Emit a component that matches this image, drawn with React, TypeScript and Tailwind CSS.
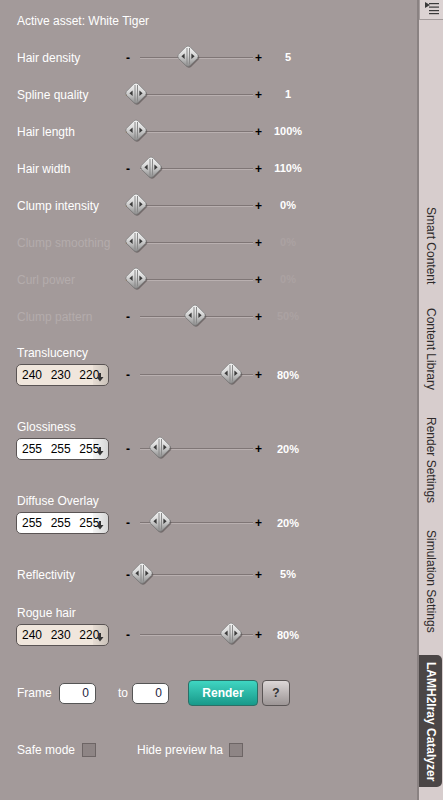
import React from "react";

const FONT = { fontFamily: '"Liberation Sans", Arial, sans-serif' };

function Knob() {
  return (
    <svg width="26" height="24" viewBox="0 0 26 24">
      <defs>
        <linearGradient id="kg" x1="0" y1="0" x2="0" y2="1">
          <stop offset="0" stopColor="#f6f6f6" />
          <stop offset="0.45" stopColor="#d6d6d6" />
          <stop offset="1" stopColor="#8c8c8c" />
        </linearGradient>
      </defs>
      <path
        d="M11 3 Q13 1.5 15 3 L22.5 10.5 Q24 12.5 22.5 14.5 L15 22 Q13 23.5 11 22 L3.5 14.5 Q2 12.5 3.5 10.5 Z"
        fill="#4a4444"
        opacity="0.55"
      />
      <path
        d="M10 1.8 Q12 0.3 14 1.8 L21.5 9.3 Q23 11.3 21.5 13.3 L14 20.8 Q12 22.3 10 20.8 L2.5 13.3 Q1 11.3 2.5 9.3 Z"
        fill="url(#kg)"
        stroke="#777"
        strokeWidth="0.7"
      />
      <rect x="10.5" y="3" width="1" height="16.5" fill="#8a8a8a" />
      <rect x="13" y="3" width="1" height="16.5" fill="#8a8a8a" />
      <path d="M8.6 8.6 L5.4 11.3 L8.6 14 Z" fill="#3a3a3a" />
      <path d="M15.4 8.6 L18.6 11.3 L15.4 14 Z" fill="#3a3a3a" />
    </svg>
  );
}

function Slider({ pct }: { pct: number }) {
  const left = pct * 118.75 - 2;
  return (
    <div className="relative w-[138px] h-[24px] flex items-center">
      <span className="w-[6px] text-[12px] font-bold text-black leading-none">-</span>
      <div className="ml-[8px] w-[113px] flex flex-col">
        <div className="h-px bg-[#7f7676]" />
        <div className="h-px bg-[#b9b0b0]" />
      </div>
      <span className="ml-[2px] text-[12px] font-bold text-black leading-none">+</span>
      <div className="absolute top-[-1px]" style={{ left }}>
        <Knob />
      </div>
    </div>
  );
}

function SliderRow({
  label,
  pct,
  value,
  disabled,
}: {
  label: string;
  pct: number;
  value: string;
  disabled?: boolean;
}) {
  return (
    <div className="h-[37px] flex items-center pl-[17px]">
      <div
        className={`w-[109px] text-[12px] ${disabled ? "text-[#b4acac]" : "text-white"}`}
      >
        {label}
      </div>
      <Slider pct={pct} />
      <div
        className={`w-[48px] text-center text-[11px] font-bold ${
          disabled ? "text-[#aba2a2]" : "text-white"
        }`}
      >
        {value}
      </div>
    </div>
  );
}

function ColorField({ rgb }: { rgb: [number, number, number] }) {
  const bg = `rgb(${rgb[0]},${rgb[1]},${rgb[2]})`;
  return (
    <div
      className="relative w-[93px] h-[22px] rounded-[5px] border border-[#5a5454] flex items-center pl-[5px] overflow-hidden"
      style={{ backgroundColor: bg }}
    >
      {rgb.map((v, i) => (
        <span key={i} className="w-[30px] text-[12px] text-black">
          {v}
        </span>
      ))}
      <div className="absolute right-0 top-0 bottom-0 w-[15px] bg-gradient-to-r from-[rgba(0,0,0,0.04)] to-[rgba(0,0,0,0.16)]" />
      <svg className="absolute right-[4px] top-[8px]" width="8" height="9" viewBox="0 0 8 9">
        <rect x="3" y="0" width="2" height="4" fill="#333" />
        <path d="M0.5 4 L7.5 4 L4 8.5 Z" fill="#333" />
      </svg>
    </div>
  );
}

function ColorBlock({
  label,
  rgb,
  pct,
  value,
  mt,
}: {
  label: string;
  rgb: [number, number, number];
  pct: number;
  value: string;
  mt: string;
}) {
  return (
    <div className={mt}>
      <div className="h-[18px] flex items-center pl-[17px] text-[12px] text-white">{label}</div>
      <div className="h-[26px] flex items-center pl-[16px]">
        <div className="w-[110px]">
          <ColorField rgb={rgb} />
        </div>
        <Slider pct={pct} />
        <div className="w-[48px] text-center text-[11px] font-bold text-white">{value}</div>
      </div>
    </div>
  );
}

function NumInput() {
  return (
    <div className="w-[37px] h-[21px] rounded-[5px] border border-[#555] bg-white flex items-center justify-end pr-[6px] text-[12px] text-[#1e2440]">
      0
    </div>
  );
}

function Checkbox() {
  return <div className="w-[14px] h-[14px] bg-[#8e8585] border border-[#6d6565]" />;
}

export default function App() {
  return (
    <div className="w-[443px] h-[800px] flex bg-[#a39a9a] overflow-hidden" style={FONT}>
      <div className="w-[417px] flex flex-col pt-[3px]">
        <div className="h-[36px] flex items-center pl-[17px] text-[12px] text-white">
          Active asset: White Tiger
        </div>
        <SliderRow label="Hair density" pct={0.44} value="5" />
        <SliderRow label="Spline quality" pct={0} value="1" />
        <SliderRow label="Hair length" pct={0} value="100%" />
        <SliderRow label="Hair width" pct={0.125} value="110%" />
        <SliderRow label="Clump intensity" pct={0} value="0%" />
        <SliderRow label="Clump smoothing" pct={0} value="0%" disabled />
        <SliderRow label="Curl power" pct={0} value="0%" disabled />
        <SliderRow label="Clump pattern" pct={0.5} value="50%" disabled />

        <ColorBlock label="Translucency" rgb={[240, 230, 220]} pct={0.8} value="80%" mt="mt-[9px]" />
        <ColorBlock label="Glossiness" rgb={[255, 255, 255]} pct={0.2} value="20%" mt="mt-[30px]" />
        <ColorBlock label="Diffuse Overlay" rgb={[255, 255, 255]} pct={0.2} value="20%" mt="mt-[30px]" />
        <div className="mt-[20px]">
          <SliderRow label="Reflectivity" pct={0.05} value="5%" />
        </div>
        <ColorBlock label="Rogue hair" rgb={[240, 230, 220]} pct={0.8} value="80%" mt="mt-[11px]" />

        <div className="mt-[31px] h-[28px] flex items-center pl-[17px] text-[12px] text-white">
          <span className="w-[42px]">Frame</span>
          <NumInput />
          <span className="ml-[22px] w-[14px]">to</span>
          <NumInput />
          <button className="ml-[19px] w-[70px] h-[26px] rounded-[4px] border border-[#2b6f66] bg-gradient-to-b from-[#3fd6c2] to-[#17998a] text-white text-[12px] font-bold">
            Render
          </button>
          <button className="ml-[4px] w-[28px] h-[26px] rounded-[4px] border border-[#5a5555] bg-gradient-to-b from-[#dcd7d7] to-[#9c9595] text-[#333] text-[12px] font-bold">
            ?
          </button>
        </div>

        <div className="mt-[33px] h-[20px] flex items-center pl-[17px] text-[12px] text-white">
          <span className="w-[65px]">Safe mode</span>
          <Checkbox />
          <span className="ml-[41px] w-[92px]">Hide preview ha</span>
          <Checkbox />
        </div>
      </div>

      <div className="w-[2px] bg-[#8a8282]" />

      <div className="w-[24px] bg-[#d7cdcd] flex flex-col">
        <div className="h-[20px] bg-[#dcd3d3] border-b border-l border-[#a49c9c] flex items-start justify-center pt-[1px]">
          <svg width="16" height="14" viewBox="0 0 16 14">
            <path d="M1 1 L6 4 L1 7 Z" fill="#3a3a3a" />
            <rect x="5" y="2" width="10" height="1.2" fill="#3a3a3a" />
            <rect x="5" y="5.5" width="10" height="1.2" fill="#3a3a3a" />
            <rect x="5" y="9" width="10" height="1.2" fill="#3a3a3a" />
            <rect x="5" y="12" width="10" height="1.2" fill="#3a3a3a" />
          </svg>
        </div>
        <div className="h-[187px]" />
        {[
          ["Smart Content", "h-[101px]"],
          ["Content Library", "h-[109px]"],
          ["Render Settings", "h-[113px]"],
          ["Simulation Settings", "h-[125px]"],
        ].map(([t, h]) => (
          <div key={t} className={`${h} flex justify-center`}>
            <span className="text-[12px] text-[#2e2a2a] leading-none" style={{ writingMode: "vertical-rl" }}>
              {t}
            </span>
          </div>
        ))}
        <div className="h-[132px] mr-[1px] bg-[#4b4646] rounded-r-[5px] flex justify-center pt-[7px]">
          <span className="text-[12px] font-bold text-white leading-none" style={{ writingMode: "vertical-rl" }}>
            LAMH2Iray Catalyzer
          </span>
        </div>
      </div>
    </div>
  );
}
